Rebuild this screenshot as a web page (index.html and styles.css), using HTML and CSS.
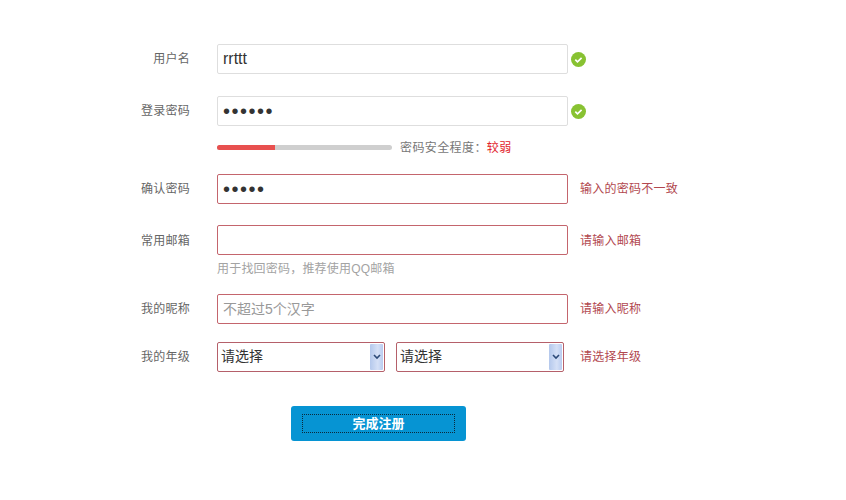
FILE: index.html
```html
<!DOCTYPE html>
<html lang="zh-CN">

<head>
    <meta charset="UTF-8">
    <title>注册</title>
    <link rel="stylesheet" href="styles.css">
</head>

<body>
    <form class="reg-form">
        <div class="row">
            <label class="row-label">用户名</label>
            <input class="field" type="text" value="rrttt">
            <svg class="ok-icon" viewBox="0 0 16 16"><circle cx="8" cy="8" r="8" fill="#88c232"/><path d="M4.6 8.2l2.3 2.2 4.4-4.2" fill="none" stroke="#fff" stroke-width="1.8"/></svg>
        </div>
        <div class="row">
            <label class="row-label">登录密码</label>
            <input class="field" type="password" value="123456">
            <svg class="ok-icon" viewBox="0 0 16 16"><circle cx="8" cy="8" r="8" fill="#88c232"/><path d="M4.6 8.2l2.3 2.2 4.4-4.2" fill="none" stroke="#fff" stroke-width="1.8"/></svg>
        </div>
        <div class="strength">
            <div class="strength-bar"><div class="strength-fill"></div></div>
            <span class="strength-text">密码安全程度：<em>较弱</em></span>
        </div>
        <div class="row row-confirm">
            <label class="row-label">确认密码</label>
            <input class="field error" type="password" value="12345">
            <span class="error-msg">输入的密码不一致</span>
        </div>
        <div class="row row-email">
            <label class="row-label">常用邮箱</label>
            <input class="field error" type="text">
            <span class="error-msg">请输入邮箱</span>
        </div>
        <p class="hint">用于找回密码，推荐使用QQ邮箱</p>
        <div class="row row-nick">
            <label class="row-label">我的昵称</label>
            <input class="field error" type="text" placeholder="不超过5个汉字">
            <span class="error-msg">请输入昵称</span>
        </div>
        <div class="row">
            <label class="row-label">我的年级</label>
            <div class="select-group">
                <div class="select-wrap">
                    <select class="select"><option>请选择</option></select>
                    <span class="select-arrow"><svg viewBox="0 0 8 6" width="8" height="6"><path d="M1 1l3 3 3-3" fill="none" stroke="#2d4a78" stroke-width="1.6"/></svg></span>
                </div>
                <div class="select-wrap">
                    <select class="select"><option>请选择</option></select>
                    <span class="select-arrow"><svg viewBox="0 0 8 6" width="8" height="6"><path d="M1 1l3 3 3-3" fill="none" stroke="#2d4a78" stroke-width="1.6"/></svg></span>
                </div>
            </div>
            <span class="error-msg">请选择年级</span>
        </div>
        <div class="submit-row">
            <button class="btn" type="button"><span class="btn-focus">完成注册</span></button>
        </div>
    </form>
</body>

</html>
```

FILE: styles.css
```css
body {
    margin: 0;
    background-color: #fff;
    font-family: "Liberation Sans", "Noto Sans CJK SC", sans-serif;
    font-size: 12px;
    color: #666;
}

.reg-form {
    padding-top: 44px;
}

.row {
    display: flex;
    align-items: center;
    height: 30px;
    margin-bottom: 22px;
}

.row-label {
    width: 190px;
    margin-right: 27px;
    padding-bottom: 4px;
    text-align: right;
    letter-spacing: 0.25px;
    color: #666;
}

.field {
    box-sizing: border-box;
    width: 351px;
    height: 30px;
    padding: 0 5px;
    border: 1px solid #dedede;
    border-radius: 2px;
    outline: none;
    font-family: "Liberation Sans", "Noto Sans CJK SC", sans-serif;
    font-size: 16px;
    color: #333;
}

.field[type="password"] {
    font-size: 20px;
    letter-spacing: 1.5px;
}

.field::placeholder {
    font-size: 14px;
    color: #999;
}

.field.error {
    border-color: #c4656d;
}

.ok-icon {
    width: 15px;
    height: 15px;
    margin-left: 3px;
}

.error-msg {
    margin-left: 12px;
    padding-bottom: 4px;
    letter-spacing: 0.25px;
    color: #b2484f;
}

.strength {
    display: flex;
    align-items: center;
    height: 20px;
    margin: -11px 0 17px 217px;
}

.strength-bar {
    width: 175px;
    height: 5px;
    border-radius: 3px;
    background-color: #cfcfcf;
    overflow: hidden;
}

.strength-fill {
    width: 58px;
    height: 5px;
    background-color: #e8504f;
}

.strength-text {
    margin-left: 8px;
    padding-bottom: 2px;
    letter-spacing: 0.4px;
    color: #777;
}

.strength-text em {
    font-style: normal;
    color: #e2242c;
}

.row-confirm {
    margin-bottom: 21px;
}

.row-email {
    margin-bottom: 4px;
}

.row-email .row-label,
.row-email .error-msg {
    padding-bottom: 2px;
}

.hint {
    height: 20px;
    margin: 0 0 15px 217px;
    line-height: 20px;
    letter-spacing: 0.2px;
    color: #a3a3a3;
}

.row-nick {
    margin-bottom: 18px;
}

.select-group {
    display: flex;
    gap: 11px;
    width: 351px;
}

.select-wrap {
    position: relative;
    width: 168px;
    height: 30px;
}

.select {
    appearance: none;
    box-sizing: border-box;
    width: 100%;
    height: 30px;
    padding: 0 3px 2px;
    border: 1px solid #b5606a;
    border-radius: 2px;
    outline: none;
    background-color: #fff;
    font-family: "Liberation Sans", "Noto Sans CJK SC", sans-serif;
    font-size: 14px;
    color: #333;
}

.select-arrow {
    position: absolute;
    top: 2px;
    right: 2px;
    display: flex;
    align-items: center;
    justify-content: center;
    width: 13px;
    height: 26px;
    border-radius: 1px;
    background: linear-gradient(90deg, #b4c8ec, #d5e0f6 60%, #b9ccf0);
}

.submit-row {
    padding: 12px 0 0 291px;
}

.btn {
    box-sizing: border-box;
    display: flex;
    align-items: center;
    justify-content: center;
    width: 175px;
    height: 35px;
    padding: 0;
    border: none;
    border-radius: 3px;
    background-color: #0694d3;
}

.btn-focus {
    box-sizing: border-box;
    width: 153px;
    height: 19px;
    border: 1px dotted #0b2a3c;
    line-height: 17px;
    text-align: center;
    font-family: "Liberation Sans", "Noto Sans CJK SC", sans-serif;
    font-size: 13px;
    font-weight: bold;
    color: #fff;
}
```
